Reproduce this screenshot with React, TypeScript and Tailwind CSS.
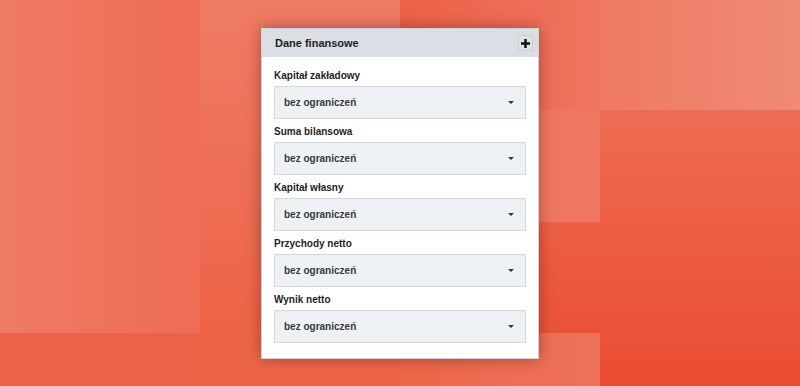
import React from "react";

const fields = [
  "Kapitał zakładowy",
  "Suma bilansowa",
  "Kapitał własny",
  "Przychody netto",
  "Wynik netto",
];

function Background() {
  return (
    <svg
      className="absolute inset-0 h-full w-full"
      viewBox="0 0 800 386"
      preserveAspectRatio="none"
    >
      <defs>
        <linearGradient id="base" x1="0" y1="0" x2="0" y2="1">
          <stop offset="0" stopColor="#ef7962" />
          <stop offset="1" stopColor="#ea4c30" />
        </linearGradient>
        <linearGradient id="c1" x1="0" y1="0" x2="1" y2="0">
          <stop offset="0" stopColor="#ef7a64" />
          <stop offset="1" stopColor="#ee6c55" />
        </linearGradient>
        <linearGradient id="c2" x1="0" y1="0" x2="0" y2="1">
          <stop offset="0" stopColor="#ef7b65" />
          <stop offset="1" stopColor="#ed6347" />
        </linearGradient>
        <linearGradient id="t3" x1="0" y1="0" x2="1" y2="0">
          <stop offset="0" stopColor="#ec6047" />
          <stop offset="1" stopColor="#ef7560" />
        </linearGradient>
        <linearGradient id="t4" x1="0" y1="0" x2="1" y2="0">
          <stop offset="0" stopColor="#ef7963" />
          <stop offset="1" stopColor="#f08b76" />
        </linearGradient>
        <linearGradient id="b3" x1="0" y1="0" x2="1" y2="0">
          <stop offset="0" stopColor="#ed6549" />
          <stop offset="1" stopColor="#ee725b" />
        </linearGradient>
      </defs>
      <rect x="0" y="0" width="800" height="386" fill="url(#base)" />
      <rect x="0" y="0" width="200" height="333" fill="url(#c1)" />
      <rect x="0" y="333" width="200" height="53" fill="#ed6148" />
      <rect x="200" y="0" width="200" height="333" fill="url(#c2)" />
      <rect x="200" y="333" width="200" height="53" fill="#ed6549" />
      <rect x="400" y="0" width="200" height="110" fill="url(#t3)" />
      <rect x="600" y="0" width="200" height="110" fill="url(#t4)" />
      <rect x="400" y="110" width="200" height="112" fill="#ef7761" />
      <rect x="400" y="333" width="200" height="53" fill="url(#b3)" />
    </svg>
  );
}

function Caret() {
  return (
    <svg width="6" height="3" viewBox="0 0 6 3" className="block">
      <path d="M0 0 H6 L3 3 Z" fill="#333" />
    </svg>
  );
}

export default function App() {
  return (
    <div
      className="relative h-[386px] w-[800px] overflow-hidden"
      style={{ fontFamily: '"Liberation Sans", Arial, sans-serif' }}
    >
      <Background />
      <div className="relative flex justify-center pt-[28px]">
        <div className="w-[278px] border border-[#cbd2d8] bg-white shadow-[0_0_14px_rgba(60,20,10,0.4)]">
          <div className="flex h-[28px] items-center justify-between bg-[#d9dfe5] pl-[13px] pr-[5px]">
            <span className="text-[11px] font-bold text-[#1e1e1e]">
              Dane finansowe
            </span>
            <div className="flex h-[16px] w-[15px] items-center justify-center border border-[#c9d0d6] bg-[#dde2e7]">
              <svg width="9" height="9" viewBox="0 0 9 9">
                <path d="M3.3 0 H5.7 V3.3 H9 V5.7 H5.7 V9 H3.3 V5.7 H0 V3.3 H3.3 Z" fill="#111" />
              </svg>
            </div>
          </div>
          <div className="flex flex-col px-[12px] pb-[15px] pt-[12px]">
            {fields.map((f, i) => (
              <div key={f} className={i > 0 ? "mt-[6px]" : ""}>
                <div className="h-[14px] text-[10px] font-bold leading-[14px] text-[#1e1e1e]">
                  {f}
                </div>
                <div className="mt-[3px] flex h-[33px] items-center justify-between border border-[#d3d9de] bg-[#eef1f4] pl-[9px] pr-[11px]">
                  <span className="text-[10px] font-bold text-[#3a3a3a]">
                    bez ograniczeń
                  </span>
                  <Caret />
                </div>
              </div>
            ))}
          </div>
        </div>
      </div>
    </div>
  );
}
